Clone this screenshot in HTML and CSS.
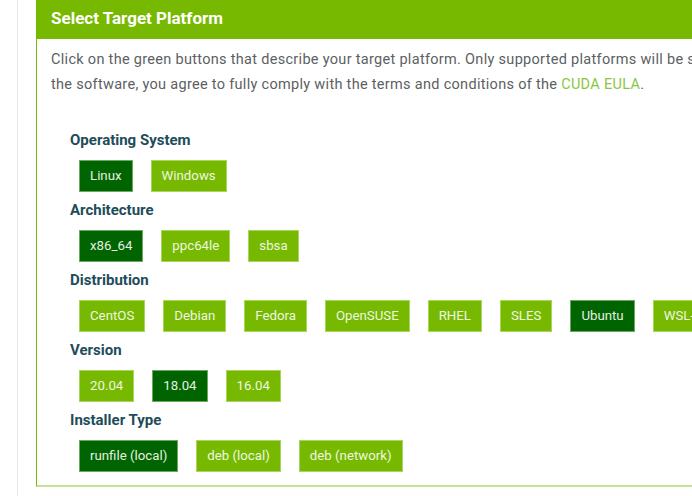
FILE: index.html
```html
<!DOCTYPE html>
<html lang="en">
<head>
<meta charset="utf-8">
<title>Select Target Platform</title>
<link rel="stylesheet" href="styles.css">
</head>
<body>
<div class="page">
  <section class="panel">
    <h2 class="panel-title">Select Target Platform</h2>
    <div class="panel-body">
      <p class="intro">Click on the green buttons that describe your target platform. Only supported platforms will be shown. By downloading and using<br>the software, you agree to fully comply with the terms and conditions of the <a href="#" class="eula">CUDA EULA</a>.</p>
      <div class="groups">
        <div class="group">
          <div class="label">Operating System</div>
          <div class="buttons">
            <span class="btn active">Linux</span>
            <span class="btn">Windows</span>
          </div>
        </div>
        <div class="group">
          <div class="label">Architecture</div>
          <div class="buttons">
            <span class="btn active">x86_64</span>
            <span class="btn">ppc64le</span>
            <span class="btn">sbsa</span>
          </div>
        </div>
        <div class="group">
          <div class="label">Distribution</div>
          <div class="buttons">
            <span class="btn">CentOS</span>
            <span class="btn">Debian</span>
            <span class="btn">Fedora</span>
            <span class="btn">OpenSUSE</span>
            <span class="btn">RHEL</span>
            <span class="btn">SLES</span>
            <span class="btn active">Ubuntu</span>
            <span class="btn">WSL-Ubuntu</span>
          </div>
        </div>
        <div class="group">
          <div class="label">Version</div>
          <div class="buttons">
            <span class="btn">20.04</span>
            <span class="btn active">18.04</span>
            <span class="btn">16.04</span>
          </div>
        </div>
        <div class="group">
          <div class="label">Installer Type</div>
          <div class="buttons">
            <span class="btn active">runfile (local)</span>
            <span class="btn">deb (local)</span>
            <span class="btn">deb (network)</span>
          </div>
        </div>
      </div>
    </div>
  </section>
</div>
</body>
</html>
```
FILE: styles.css
```css
html, body {
  margin: 0;
  padding: 0;
  background: #ffffff;
  overflow: hidden;
  height: 496px;
}
body {
  font-family: Roboto, "Noto Sans", sans-serif;
}
.page {
  margin-left: 17px;
  border-left: 1px solid #e8e8e8;
  padding-left: 18px;
  height: 496px;
  width: 1100px;
}
.panel {
  width: 1000px;
  border-left: 1px solid #76b900;
  border-bottom: 2px solid #c3e296;
  box-sizing: border-box;
}
.panel-title {
  margin: 0;
  height: 39px;
  line-height: 37px;
  background: #76b900;
  color: #ffffff;
  font-size: 17px;
  font-weight: 700;
  padding-left: 14px;
}
.panel-body {
  padding: 8px 0 13px 14px;
}
.intro {
  margin: 0;
  white-space: nowrap;
  font-size: 14.5px;
  line-height: 25px;
  color: #5c5f63;
  letter-spacing: 0.3px;
}
.eula {
  color: #8cc63f;
  text-decoration: none;
}
.groups {
  padding: 33px 0 0 19px;
  display: flex;
  flex-direction: column;
  gap: 8px;
}
.group {
  display: flex;
  flex-direction: column;
  gap: 10px;
}
.label {
  font-size: 15px;
  font-weight: 700;
  line-height: 20px;
  color: #1e4c5a;
}
.buttons {
  display: flex;
  gap: 18px;
  padding-left: 9px;
  flex-wrap: nowrap;
}
.btn {
  flex: none;
  box-sizing: border-box;
  height: 32px;
  line-height: 30px;
  padding: 0 10px;
  font-size: 13.25px;
  color: #eef7e0;
  background: #76b900;
  border: 1px solid #a8d65c;
}
.btn.active {
  background: #006400;
  border-color: #6ea860;
  color: #e6f0e0;
}
```
